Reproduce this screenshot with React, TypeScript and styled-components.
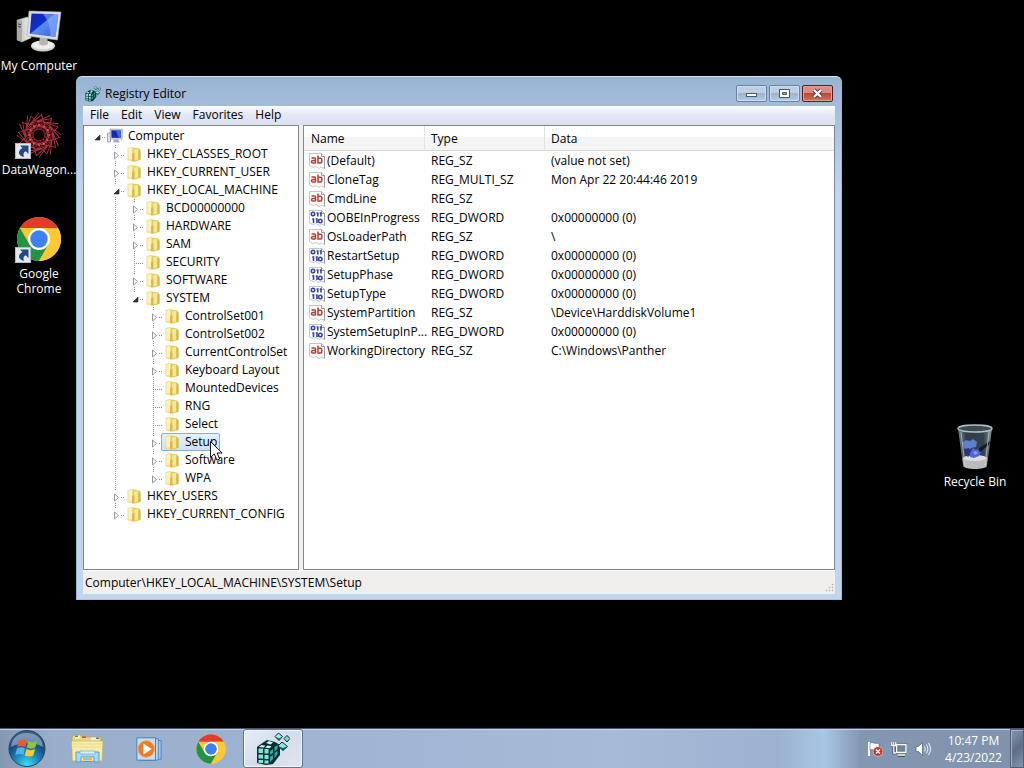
import React from "react";
import styled, { createGlobalStyle, css } from "styled-components";

const GlobalStyle = createGlobalStyle`
  *, *::before, *::after { box-sizing: border-box; }
  body {
    margin: 0;
    background: #000;
    color: #000;
    font: 12px/18px "Open Sans", "Noto Sans", sans-serif;
  }
  button {
    margin: 0;
    padding: 0;
    border: 0;
    background: none;
    color: inherit;
    font: inherit;
    cursor: default;
  }
  svg { display: block; flex: none; }
`;

const Screen = styled.div`
  display: flex;
  flex-direction: column;
  min-height: 100vh;
  overflow: hidden;
`;

const Desktop = styled.main`
  position: relative;
  flex: 1;
  background: #000;
`;

/* ---------- desktop shortcuts ---------- */

const Shortcut = styled.button<{ $top: number; $side?: "left" | "right" }>`
  position: absolute;
  top: ${(p) => p.$top}px;
  ${(p) => (p.$side === "right" ? "right: 8px;" : "left: -2px;")}
  display: flex;
  flex-direction: column;
  align-items: center;
  gap: 3px;
  width: 82px;
  color: #fff;
  line-height: 15px;
  text-align: center;
`;

const ShortcutArt = styled.span`
  position: relative;
  display: block;
`;

const ArrowBadge = styled.span`
  position: absolute;
  left: 0;
  bottom: 0;
`;

const ShortcutArrow = () => (
  <ArrowBadge>
    <svg width="16" height="16" viewBox="0 0 16 16">
      <rect x=".5" y=".5" width="15" height="15" fill="#e4e8ee" stroke="#b6bcc6" />
      <path d="M5 2.500h8.500V11l-2.700-2.700C8.500 9 8 11 9 14 4 13 1.500 8.500 7.500 5z" fill="#1f4a86" />
    </svg>
  </ArrowBadge>
);

const ComputerArt = () => (
  <svg width="48" height="48" viewBox="0 0 48 48">
    <defs>
      <linearGradient id="screenBlue" x1="0" y1="0" x2="1" y2="1">
        <stop offset="0" stopColor="#1029a8" />
        <stop offset=".42" stopColor="#0d2fd0" />
        <stop offset=".46" stopColor="#5b8df0" />
        <stop offset="1" stopColor="#2c5fe0" />
      </linearGradient>
      <linearGradient id="caseGrey" x1="0" y1="0" x2="1" y2="0">
        <stop offset="0" stopColor="#b9bab8" />
        <stop offset="1" stopColor="#f2f2ee" />
      </linearGradient>
    </defs>
    <path d="M2 13l10-3 4 1v20L7 35l-5-2z" fill="url(#caseGrey)" stroke="#8e8f8c" strokeWidth=".6" />
    <path d="M2 13l5 1v21l-5-2z" fill="#a9aaa7" />
    <path d="M3 17l3 .6M3 19.500l3 .6" stroke="#444" />
    <ellipse cx="28" cy="39" rx="12" ry="5.500" fill="#cfd0cc" />
    <ellipse cx="28" cy="38" rx="11" ry="4.300" fill="#ecece8" />
    <path d="M25 29h7l1 8c-3 2-6 2-9 0z" fill="#b4b6b4" />
    <path d="M14 4l32 1-3.500 28L12 29z" fill="#dedfdd" stroke="#a8aaa9" strokeWidth=".6" />
    <path d="M16.500 6.500L43.500 7.300 40.500 30 14.800 26.800z" fill="url(#screenBlue)" />
    <path d="M28 7l15.500.3L40.500 30l-5-.6c0-8-2-16-7.500-22.400z" fill="#88b0fa" opacity=".6" />
  </svg>
);

const WagonArt = () => {
  const spokes = [0, 30, 60, 90, 120, 150, 180, 210, 240, 270, 300, 330];
  return (
    <svg width="48" height="48" viewBox="0 0 48 48">
      <g fill="none" stroke="#b8343e" strokeWidth=".9">
        {spokes.map((a) => (
          <g key={a} transform={`rotate(${a} 24 24)`}>
            <path d="M24 1.500L11 19l5-14 18 17" />
            <circle cx="24" cy="15" r="3.500" strokeWidth=".6" />
          </g>
        ))}
        <circle cx="24" cy="24" r="6" stroke="#7e1d26" />
      </g>
      <g fill="#e3626b">
        {spokes.map((a) => (
          <circle key={a} cx="24" cy="14" r="1" transform={`rotate(${a} 24 24)`} />
        ))}
      </g>
      <circle cx="24" cy="24" r="4" fill="#120306" />
    </svg>
  );
};

const ChromeArt = ({ size }: { size: number }) => (
  <svg width={size} height={size} viewBox="0 0 48 48">
    <circle cx="24" cy="24" r="22" fill="#fcc934" />
    <path d="M4.950 13A22 22 0 0 1 43.050 13H24z" fill="#e33b2e" />
    <path d="M4.950 13A22 22 0 0 0 24 46L33.500 29.500 24 24 14.500 29.500z" fill="#229342" />
    <path d="M24 46A22 22 0 0 0 43.050 13H24l9.500 16.500z" fill="#fcc934" />
    <circle cx="24" cy="24" r="11" fill="#fff" />
    <circle cx="24" cy="24" r="8.700" fill="#3b82f0" />
  </svg>
);

const RecycleArt = () => (
  <svg width="48" height="48" viewBox="0 0 48 48">
    <defs>
      <linearGradient id="glass" x1="0" y1="0" x2="1" y2="0">
        <stop offset="0" stopColor="#76858f" />
        <stop offset=".25" stopColor="#2f3d4a" />
        <stop offset=".75" stopColor="#35424d" />
        <stop offset="1" stopColor="#8b979e" />
      </linearGradient>
    </defs>
    <path d="M7 5h34l-5 38c-1 4-23 4-24 0z" fill="url(#glass)" />
    <path d="M11.500 35c6-3 19-3 25 0l-1 8c-1 4-22 4-23 0z" fill="#b9bcba" />
    <ellipse cx="24" cy="35" rx="12" ry="3" fill="#dcdedb" />
    <path d="M11 20l4-3 4 1 3-2 4 3-1 5-5 1-2 4-4-3z" fill="#5c82cc" />
    <path d="M13 26l5-1 3 5-4 4-3-3z" fill="#27397e" />
    <path d="M19 30l3-5 3 2 3-2 2 4-2 4-5 2-4-1z" fill="#4c66e0" />
    <path d="M22 29l3-1 2 2-3 2z" fill="#8aa2f5" />
    <path d="M27 26l12-8-1 4-9 7z" fill="#121a22" />
    <path d="M10 9l4 33M38 9l-4 33" stroke="#c5ced2" strokeWidth="1" opacity=".7" />
    <ellipse cx="24" cy="5.500" rx="17" ry="3.500" fill="#3b4a54" stroke="#b6bfc1" strokeWidth="1.400" />
  </svg>
);

/* ---------- window frame ---------- */

const Window = styled.section`
  position: absolute;
  top: 76px;
  right: 182px;
  bottom: 128px;
  left: 76px;
  display: flex;
  flex-direction: column;
  padding: 0 6px 5px;
  border: 1px solid;
  border-color: #d6e5f3 #6fd0e4 #7fd8ee #9fb5cb;
  border-radius: 6px 6px 0 0;
  background:
    linear-gradient(180deg, rgba(150, 178, 209, 0.95) 0, rgba(186, 209, 234, 0) 110px),
    #c1d5ec;
`;

const TitleBar = styled.header`
  display: flex;
  align-items: center;
  gap: 4px;
  height: 29px;
  padding: 4px 2px 0;
`;

const Title = styled.h1`
  flex: 1;
  margin: 0;
  font-size: 12px;
  font-weight: 400;
`;

const Controls = styled.div`
  display: flex;
  gap: 2px;
`;

const ControlButton = styled.button<{ $close?: boolean }>`
  display: grid;
  place-items: center;
  width: 31px;
  height: 17px;
  border: 1px solid ${(p) => (p.$close ? "#531c22" : "#67809d")};
  border-radius: 2px;
  box-shadow: inset 0 0 0 1px ${(p) => (p.$close ? "#e3a497" : "#cfdff0")};
  background: ${(p) =>
    p.$close
      ? "linear-gradient(#d98c80 0 45%, #be4534 50%, #d07560)"
      : "linear-gradient(#bccfe4 0 45%, #9bb5d1 50%, #b4cbe4)"};
`;

const MenuBar = styled.nav`
  display: flex;
  height: 19px;
  padding-left: 1px;
  background: linear-gradient(#fbfcfe, #e4e8f6 45%, #dce1f2);
`;

const MenuItem = styled.button`
  height: 17px;
  padding: 0 6px;
  line-height: 17px;
`;

const Panes = styled.div`
  display: flex;
  flex: 1;
  gap: 4px;
  min-height: 0;
  background: #f0f0f0;
`;

const paneBorder = css`
  border: 1px solid #80868e;
  background: #fff;
`;

const TreePane = styled.div`
  ${paneBorder}
  flex: 0 0 216px;
  padding: 1px 0 0 4px;
  overflow: hidden;
`;

const ListPane = styled.div`
  ${paneBorder}
  flex: 1;
  overflow: hidden;
`;

const StatusBar = styled.footer`
  display: flex;
  align-items: flex-end;
  justify-content: space-between;
  height: 24px;
  padding: 0 1px 2px 2px;
  border-top: 1px solid #fff;
  background: #f1efee;
`;

/* ---------- registry tree ---------- */

const TreeList = styled.ul`
  margin: 0;
  padding: 0;
  list-style: none;
`;

const TreeRow = styled.div`
  display: flex;
  height: 18px;
`;

type Line = "none" | "full" | "top";

const dotsDown = "repeating-linear-gradient(180deg, #8d8d8d 0 1px, transparent 1px 2px)";
const dotsAcross = "repeating-linear-gradient(90deg, #8d8d8d 0 1px, transparent 1px 2px)";

const Guide = styled.span<{ $line: Line; $branch?: boolean }>`
  display: grid;
  justify-items: center;
  align-items: center;
  flex: 0 0 19px;
  padding-top: 2px;
  background-image: ${(p) => (p.$line === "none" ? "none" : dotsDown)}, ${(p) => (p.$branch ? dotsAcross : "none")};
  background-position: 8px 0, 8px 10px;
  background-size: 1px ${(p) => (p.$line === "top" ? "10px" : "18px")}, 10px 1px;
  background-repeat: no-repeat;
`;

const Expander = styled.button`
  display: grid;
  place-items: center;
  width: 9px;
  height: 12px;
  background: #fff;
`;

const KeyLabel = styled.button<{ $selected?: boolean }>`
  display: flex;
  align-items: center;
  gap: 5px;
  height: 18px;
  margin-left: -3px;
  padding: 0 3px;
  line-height: 18px;
  white-space: nowrap;
  ${(p) =>
    p.$selected &&
    css`
      border-radius: 2px;
      background: linear-gradient(#e9f2fc, #c9e0fa);
      outline: 1px solid #86aedb;
      outline-offset: -1px;
    `}
`;

const FolderIcon = () => (
  <svg width="16" height="16" viewBox="0 0 16 16">
    <path d="M1.500 2L7 .7v14.800l-5.500-1z" fill="#efe08a" />
    <path d="M2.500 3L6 2v11l-3.500.5z" fill="#f9f3bd" />
    <path d="M7 1.500l5.500.7L14.500 4v10l-5.500 1.500H6.500z" fill="#e3cc5c" />
    <path d="M8 3.500l4-1v11l-4 1z" fill="#f4e88e" />
    <path d="M6 8l2.500-1v8l-2.500.3z" fill="#e2b64e" />
    <path d="M12.500 3.500l2 1.500v8.500l-2 .7z" fill="#d2ba56" />
  </svg>
);

const SmallComputerIcon = () => (
  <svg width="16" height="16" viewBox="0 0 16 16">
    <path d="M.5 5h3v9h-3z" fill="#e2e2dc" stroke="#8a8a86" strokeWidth=".7" />
    <path d="M3 1l12.500.3-.5 10L3.500 11z" fill="#d5d9df" stroke="#8b919b" strokeWidth=".6" />
    <path d="M4.300 2.300l9.700.2-.3 7.500-9.200-.2z" fill="#1526b8" />
    <path d="M9 2.400l5 .1-.3 7.500-2-.1z" fill="#3f6ae0" />
    <path d="M7 11.500h4l2 3H6z" fill="#a9adb3" />
  </svg>
);

const Collapsed = () => (
  <svg width="7" height="9" viewBox="0 0 7 9">
    <path d="M1.500 1v7L5.500 4.500z" fill="#fff" stroke="#989898" />
  </svg>
);

const Expanded = () => (
  <svg width="7" height="9" viewBox="0 0 7 9">
    <path d="M6 2v5H1z" fill="#303030" stroke="#262626" strokeWidth=".6" />
  </svg>
);

interface RegKey {
  name: string;
  has?: boolean;
  selected?: boolean;
  children?: RegKey[];
}

const registry: RegKey = {
  name: "Computer",
  children: [
    { name: "HKEY_CLASSES_ROOT", has: true },
    { name: "HKEY_CURRENT_USER", has: true },
    {
      name: "HKEY_LOCAL_MACHINE",
      children: [
        { name: "BCD00000000", has: true },
        { name: "HARDWARE", has: true },
        { name: "SAM", has: true },
        { name: "SECURITY" },
        { name: "SOFTWARE", has: true },
        {
          name: "SYSTEM",
          children: [
            { name: "ControlSet001", has: true },
            { name: "ControlSet002", has: true },
            { name: "CurrentControlSet", has: true },
            { name: "Keyboard Layout", has: true },
            { name: "MountedDevices" },
            { name: "RNG" },
            { name: "Select" },
            { name: "Setup", has: true, selected: true },
            { name: "Software", has: true },
            { name: "WPA", has: true },
          ],
        },
      ],
    },
    { name: "HKEY_USERS", has: true },
    { name: "HKEY_CURRENT_CONFIG", has: true },
  ],
};

const TreeNode = ({ node, trail, last }: { node: RegKey; trail: Line[]; last: boolean }) => {
  const root = node === registry;
  const own: Line = root ? "none" : last ? "top" : "full";
  const below: Line = root || last ? "none" : "full";
  return (
    <li role="treeitem" aria-expanded={!!node.children} aria-selected={!!node.selected}>
      <TreeRow>
        {trail.map((line, i) => (
          <Guide key={i} $line={line} />
        ))}
        <Guide $line={own} $branch>
          {(node.has || node.children) && (
            <Expander aria-label={`Toggle ${node.name}`}>{node.children ? <Expanded /> : <Collapsed />}</Expander>
          )}
        </Guide>
        <KeyLabel $selected={node.selected}>
          {root ? <SmallComputerIcon /> : <FolderIcon />}
          {node.name}
        </KeyLabel>
      </TreeRow>
      {node.children && (
        <TreeList role="group">
          {node.children.map((child, i) => (
            <TreeNode
              key={child.name}
              node={child}
              trail={[...trail, below]}
              last={i === node.children!.length - 1}
            />
          ))}
        </TreeList>
      )}
    </li>
  );
};

/* ---------- value list ---------- */

const ValueTable = styled.table`
  width: 100%;
  border-collapse: separate;
  border-spacing: 0;
  table-layout: fixed;
  text-align: left;
`;

const HeadCell = styled.th<{ $width?: number }>`
  width: ${(p) => (p.$width ? `${p.$width}px` : "auto")};
  height: 25px;
  padding: 2px 6px 0;
  border-bottom: 1px solid #d5d5d5;
  border-right: 1px solid #e2e3e6;
  background: linear-gradient(#fff 0 45%, #f5f5f6 45%);
  font-weight: 400;

  &:first-child { padding-left: 7px; }
  &:last-child { border-right: 0; }
`;

const Cell = styled.td`
  height: 19px;
  padding: 0 6px;
  line-height: 19px;
  white-space: nowrap;

  &:first-child { padding: 0 0 0 5px; }
`;

const ValueName = styled.span`
  display: flex;
  align-items: center;
  gap: 2px;
`;

const ValueIcon = ({ binary }: { binary: boolean }) => (
  <svg width="16" height="16" viewBox="0 0 16 16">
    <path d="M.5.500H12.500l3 3V15.500l-3-1.500-2.500 1.500-3-2-3 1-3.500-1.500z" fill="#fff" stroke="#c3c6cb" />
    <path d="M12.500.500v3h3V15.500" fill="none" stroke="#9a9fa7" />
    {binary ? (
      <g fill="none" stroke="#3444a8" strokeWidth="1.600">
        <circle cx="4" cy="4" r="1.700" />
        <path d="M7.500 3h1.300v3.500M10.700 3H12v3.500M3.200 9h1.300v4M6.700 9H8v4" />
        <circle cx="11.300" cy="11" r="1.700" />
      </g>
    ) : (
      <g fill="none" stroke="#c1392b" strokeWidth="1.500">
        <path d="M2.500 5h3q1 0 1 1v4.300M6.500 7.500H4q-1.500 0-1.500 1.300T4 10h2.500" />
        <path d="M9 2.500V10h2.300q1.600 0 1.600-2.500T11.300 5.200H9" />
      </g>
    )}
  </svg>
);

const values: [string, string, string][] = [
  ["(Default)", "REG_SZ", "(value not set)"],
  ["CloneTag", "REG_MULTI_SZ", "Mon Apr 22 20:44:46 2019"],
  ["CmdLine", "REG_SZ", ""],
  ["OOBEInProgress", "REG_DWORD", "0x00000000 (0)"],
  ["OsLoaderPath", "REG_SZ", "\\"],
  ["RestartSetup", "REG_DWORD", "0x00000000 (0)"],
  ["SetupPhase", "REG_DWORD", "0x00000000 (0)"],
  ["SetupType", "REG_DWORD", "0x00000000 (0)"],
  ["SystemPartition", "REG_SZ", "\\Device\\HarddiskVolume1"],
  ["SystemSetupInP...", "REG_DWORD", "0x00000000 (0)"],
  ["WorkingDirectory", "REG_SZ", "C:\\Windows\\Panther"],
];

/* ---------- regedit logo ---------- */

const RegeditIcon = ({ size }: { size: number }) => (
  <svg width={size} height={size} viewBox="0 0 34 34">
    <path d="M1 15l4-3 6-4 8 2 5 3v10l-7 9-7 1-9-2z" fill="#0a2f31" />
    <g fill="#7fe6da">
      <path d="M2.500 16.500h4.500v4.500H2.500zM8.500 17h4v4.500h-4zM2.500 22.500h4.500v4H2.500zM8.500 23h4v4h-4zM2.500 28h4.500v3H2.500zM8.500 28.500h4v3h-4z" />
      <path d="M14 19.500l3-2.500v4l-3 2zM14 25l3-2v4l-3 3z" fill="#35aaa6" />
      <path d="M18.500 15l3-2v4l-3 2.500zM18.500 21l3-2v3l-3 4z" fill="#35aaa6" />
    </g>
    <g fill="#c8f8f0">
      <path d="M3 15l2.500-2 4 .7L7.500 15.500zM9 15.500l2.500-2 4 .7-2 2zM10 11l3-2 4 1.500-2.500 2z" />
    </g>
    <g stroke="#082b2d" strokeWidth="1">
      <path d="M19 4.500L22.500 1l4 3.500L23 8.500z" fill="#9ceee5" />
      <path d="M28 6.500L31 3.500l3 3-3 3.500z" fill="#7fdcd6" />
      <path d="M22 14l4-4 5.500 4.500-4.500 4z" fill="#8be8de" />
    </g>
    <path d="M19 4.500l4 2 3.500-2L23 8.500zM22 14l5 2 4.500-1.500-4.500 4z" fill="#0f5a5c" />
  </svg>
);

/* ---------- taskbar ---------- */

const Taskbar = styled.footer`
  display: flex;
  align-items: stretch;
  height: 40px;
  border-top: 1px solid #46586e;
  box-shadow: inset 0 1px 0 #c3d3e6;
  background: linear-gradient(90deg, #8498b3 0, #99aecb 5%, #9fb5d3 35%, #a6bbd8 60%, #9bb2d0 76%, #a9c6e6 80.5%, #8497b2 84%, #8092ab 100%);
`;

const StartButton = styled.button`
  display: grid;
  place-items: center;
  width: 54px;
  margin-right: 3px;
`;

const TaskButton = styled.button<{ $active?: boolean }>`
  display: grid;
  place-items: center;
  width: 60px;
  margin-right: 2px;
  ${(p) =>
    p.$active &&
    css`
      border: 1px solid #64748b;
      border-radius: 3px;
      box-shadow: inset 0 0 0 1px #f4f8fc;
      background: linear-gradient(135deg, #e8eef6, #d3dceb 50%, #dfe6f1);
    `}
`;

const Tray = styled.div`
  display: flex;
  align-items: center;
  gap: 8px;
  margin-left: auto;
  padding: 0 9px 0 0;
`;

const TrayButton = styled.button`
  display: block;
`;

const Clock = styled.button`
  display: flex;
  flex-direction: column;
  justify-content: center;
  width: 67px;
  margin-right: 3px;
  color: #fff;
  line-height: 17px;
  text-align: center;
`;

const ShowDesktop = styled.button`
  width: 14px;
  border: 1px solid #4f5e73;
  box-shadow: inset 1px 1px 0 #a4b2c5;
  background: linear-gradient(135deg, #8797ae, #5f6e84 50%, #8494aa);
`;

const StartOrb = () => (
  <svg width="38" height="38" viewBox="0 0 38 38">
    <defs>
      <radialGradient id="orb" cx=".5" cy=".95" r=".9">
        <stop offset="0" stopColor="#3fe0f5" />
        <stop offset=".35" stopColor="#1f8cc4" />
        <stop offset=".7" stopColor="#1b4a7c" />
        <stop offset="1" stopColor="#3c5f85" />
      </radialGradient>
    </defs>
    <circle cx="19" cy="18.500" r="18" fill="url(#orb)" stroke="#2a4363" strokeWidth="1" />
    <path d="M3 17C4 7 11 3 19 3s15 4 16 14c-9-5-22-5-32 0z" fill="#c3d6e6" opacity=".5" />
    <g transform="translate(1 -1)">
      <path d="M10 11.500c3-1.500 5.500-1.500 8 .2L16.300 18c-2.500-1.500-5-1.500-8 0z" fill="#ef5b24" />
      <path d="M19.300 12.200c2.700 1.500 5.500 1.500 8.700 0L26.300 18.500c-3 1.500-5.800 1.500-8.500 0z" fill="#8cc63e" />
      <path d="M8 19.300c3-1.500 5.500-1.500 8 .2L14.300 26c-2.500-1.500-5-1.500-8 0z" fill="#4fb3ee" />
      <path d="M17.400 20c2.700 1.500 5.500 1.500 8.600 0l-1.700 6.500c-3 1.500-5.800 1.300-8.600 0z" fill="#fdc82f" />
    </g>
  </svg>
);

const ExplorerIcon = () => (
  <svg width="34" height="32" viewBox="0 0 34 32">
    <path d="M2 4l2-2h7l1 2h19v24H2z" fill="#e8d67c" stroke="#b9a24c" strokeWidth=".7" />
    <path d="M5 2.500h5v3H5zM21 4.500h8v3h-8z" fill="#e9f0dc" />
    <path d="M5 2.500h3v1.500H5z" fill="#4b9c3a" />
    <path d="M12 3.500h4v1.500h-4z" fill="#d94b34" />
    <path d="M26 4.500h3v1.500h-3z" fill="#3c76c4" />
    <path d="M1.500 8H33l-1 20H2.500z" fill="#f7ecaa" stroke="#c9b560" strokeWidth=".7" />
    <path d="M3 11h29M3 14h29" stroke="#e9da8b" />
    <path d="M6 29V19h23v10h-5v-5H11v5z" fill="#a9d8f2" stroke="#4c9bcb" strokeWidth=".9" />
    <path d="M10 18h15v3H10z" fill="#d9f0fb" stroke="#5aa5d0" strokeWidth=".6" />
    <path d="M13 26h9M13 28.500h9" stroke="#5f97bd" />
  </svg>
);

const PlayerIcon = () => (
  <svg width="30" height="28" viewBox="0 0 30 30">
    <path d="M8 5l20 1v20l-20 1z" fill="#9fc4e6" stroke="#4b84b8" />
    <path d="M6 4h19v23H6z" fill="#b7d6ef" stroke="#4b84b8" />
    <path d="M2 3h20v24H2z" fill="#c3def4" stroke="#3b7db8" />
    <circle cx="12" cy="15" r="9" fill="#ee7a22" stroke="#f7b37a" />
    <path d="M9 9v12l9-6z" fill="#fff" />
  </svg>
);

const FlagIcon = () => (
  <svg width="16" height="16" viewBox="0 0 16 16">
    <path d="M2 1v14" stroke="#fff" strokeWidth="2" />
    <path d="M3 2c3-1.500 4 1.500 9 0v7c-5 1.500-6-1.500-9 0z" fill="#fff" stroke="#3e4c60" strokeWidth=".5" />
    <circle cx="11" cy="10.500" r="4.800" fill="#c9302c" stroke="#f4d2cf" strokeWidth=".6" />
    <path d="M9 8.500l4 4M13 8.500l-4 4" stroke="#fff" strokeWidth="1.500" />
  </svg>
);

const NetworkIcon = () => (
  <svg width="16" height="16" viewBox="0 0 16 16">
    <path d="M5 3.500h10v8H5zM.8 1v3.500h4V1M2.800 1v11H5M7 14.500h7" fill="none" stroke="#354255" strokeWidth="2.600" />
    <path d="M5.500 3.500H15v8H5.500z" fill="#71829b" stroke="#fff" strokeWidth="1.400" />
    <path d="M7 14h7" stroke="#fff" strokeWidth="1.500" />
    <path d="M.8 1v3.500h4V1M2.800 1v11H5" fill="none" stroke="#fff" strokeWidth="1.300" />
  </svg>
);

const SpeakerIcon = () => (
  <svg width="16" height="16" viewBox="0 0 16 16">
    <path d="M1 5.500h2.500L7.500 1.500v13l-4-4H1z" fill="#fff" stroke="#3e4c60" strokeWidth=".6" />
    <path d="M9.500 5.500q1.500 2.500 0 5M11.500 3.500q3 4.500 0 9M13.500 2q4 6 0 12" fill="none" stroke="#eef2f7" />
  </svg>
);

const Pointer = styled.svg`
  position: absolute;
  top: 440px;
  left: 209px;
  pointer-events: none;
`;

const Grip = () => (
  <svg width="9" height="9" viewBox="0 0 9 9" fill="#b3b0ae">
    <path d="M7 1h1v1H7zM4 4h1v1H4zM7 4h1v1H7zM1 7h1v1H1zM4 7h1v1H4zM7 7h1v1H7z" stroke="#b3b0ae" strokeWidth=".5" />
  </svg>
);

export default function App() {
  return (
    <Screen>
      <GlobalStyle />
      <Desktop>
        <Shortcut $top={7}>
          <ShortcutArt><ComputerArt /></ShortcutArt>
          My Computer
        </Shortcut>
        <Shortcut $top={111}>
          <ShortcutArt><WagonArt /><ShortcutArrow /></ShortcutArt>
          DataWagon...
        </Shortcut>
        <Shortcut $top={215}>
          <ShortcutArt><ChromeArt size={48} /><ShortcutArrow /></ShortcutArt>
          <span>Google<br />Chrome</span>
        </Shortcut>
        <Shortcut $top={423} $side="right">
          <ShortcutArt><RecycleArt /></ShortcutArt>
          Recycle Bin
        </Shortcut>

        <Window aria-label="Registry Editor">
          <TitleBar>
            <RegeditIcon size={16} />
            <Title>Registry Editor</Title>
            <Controls>
              <ControlButton aria-label="Minimize">
                <svg width="13" height="11" viewBox="0 0 13 11">
                  <rect x="1.500" y="5.500" width="10" height="3" fill="#fff" stroke="#47576c" />
                </svg>
              </ControlButton>
              <ControlButton aria-label="Maximize">
                <svg width="13" height="11" viewBox="0 0 13 11">
                  <path d="M1.500 1.500h10v8h-10zM4.500 4.500v2h4v-2z" fill="#fff" fillRule="evenodd" stroke="#47576c" />
                </svg>
              </ControlButton>
              <ControlButton $close aria-label="Close">
                <svg width="13" height="11" viewBox="0 0 13 11">
                  <path d="M3 2l7 7M10 2L3 9" stroke="#5b3238" strokeWidth="4" />
                  <path d="M3 2l7 7M10 2L3 9" stroke="#fff" strokeWidth="2.400" />
                </svg>
              </ControlButton>
            </Controls>
          </TitleBar>
          <MenuBar>
            {["File", "Edit", "View", "Favorites", "Help"].map((m) => (
              <MenuItem key={m}>{m}</MenuItem>
            ))}
          </MenuBar>
          <Panes>
            <TreePane>
              <TreeList role="tree" aria-label="Registry keys">
                <TreeNode node={registry} trail={[]} last />
              </TreeList>
            </TreePane>
            <ListPane>
              <ValueTable>
                <thead>
                  <tr>
                    <HeadCell $width={121}>Name</HeadCell>
                    <HeadCell $width={120}>Type</HeadCell>
                    <HeadCell>Data</HeadCell>
                  </tr>
                </thead>
                <tbody>
                  {values.map(([name, type, data]) => (
                    <tr key={name}>
                      <Cell>
                        <ValueName>
                          <ValueIcon binary={type === "REG_DWORD"} />
                          {name}
                        </ValueName>
                      </Cell>
                      <Cell>{type}</Cell>
                      <Cell>{data}</Cell>
                    </tr>
                  ))}
                </tbody>
              </ValueTable>
            </ListPane>
          </Panes>
          <StatusBar>
            Computer\HKEY_LOCAL_MACHINE\SYSTEM\Setup
            <Grip />
          </StatusBar>
        </Window>

        <Pointer width="14" height="22" viewBox="0 0 14 22">
          <path d="M1.500 1.500v16l3.800-3.600 2.600 6.300 2.800-1.200-2.600-6h5z" fill="#fff" stroke="#111" />
        </Pointer>
      </Desktop>

      <Taskbar>
        <StartButton aria-label="Start"><StartOrb /></StartButton>
        <TaskButton aria-label="Windows Explorer"><ExplorerIcon /></TaskButton>
        <TaskButton aria-label="Windows Media Player"><PlayerIcon /></TaskButton>
        <TaskButton aria-label="Google Chrome"><ChromeArt size={32} /></TaskButton>
        <TaskButton $active aria-label="Registry Editor"><RegeditIcon size={34} /></TaskButton>
        <Tray>
          <TrayButton aria-label="Action Center"><FlagIcon /></TrayButton>
          <TrayButton aria-label="Network"><NetworkIcon /></TrayButton>
          <TrayButton aria-label="Volume"><SpeakerIcon /></TrayButton>
        </Tray>
        <Clock>
          <span>10:47 PM</span>
          <span>4/23/2022</span>
        </Clock>
        <ShowDesktop aria-label="Show desktop" />
      </Taskbar>
    </Screen>
  );
}
